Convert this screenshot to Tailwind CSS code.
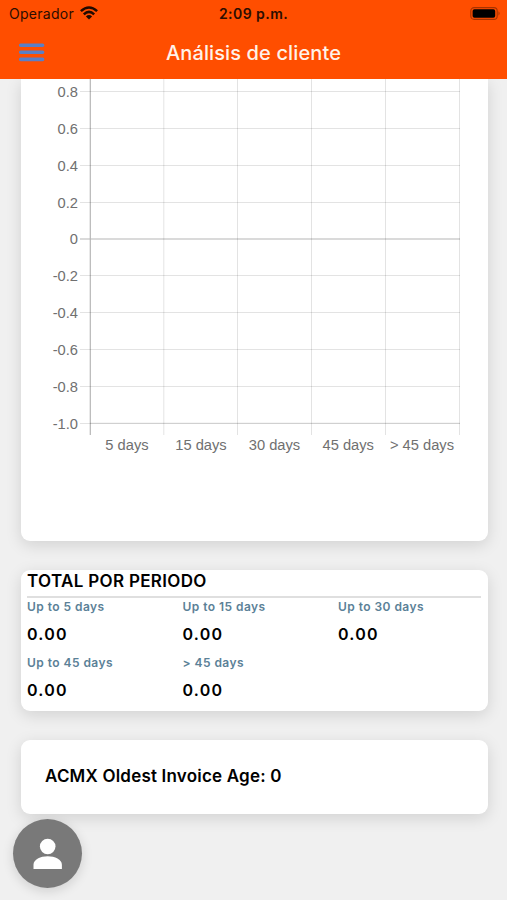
<!DOCTYPE html>
<html lang="es">
<head>
<meta charset="utf-8">
<title>Análisis de cliente</title>
<script src="https://cdn.jsdelivr.net/npm/@tailwindcss/browser@4"></script>
</head>
<body class="relative h-[900px] w-[507px] overflow-hidden bg-[#f0f0f0] font-['Inter','Liberation_Sans',sans-serif] text-black">
<header class="relative z-10 h-[79px] bg-[#ff4e00]">
  <div class="grid h-[27px] grid-cols-3 items-center px-[9px]">
    <div class="flex items-center gap-[6px]">
      <span class="whitespace-nowrap text-[14px] leading-[27px] tracking-[0.28px] text-[#2b0d00]">Operador</span>
      <svg class="h-[14px] w-[18px] -translate-y-px" viewBox="0 0 18 14" fill="none" stroke="#210a00" stroke-width="2.5"><path d="M.9 5.2Q9-2.3 17.1 5.2M3.8 8.3Q9 3.5 14.2 8.3"/><path d="M9 13.5 5.9 10.4Q9 7.8 12.1 10.4Z" fill="#210a00" stroke="none"/></svg>
    </div>
    <span class="whitespace-nowrap text-center text-[14px] font-semibold leading-[27px] tracking-[0.45px] text-[#2b0d00]">2:09 p.m.</span>
    <svg class="-mr-[2.5px] h-[13px] w-[31px] justify-self-end" viewBox="0 0 31 13"><rect x=".8" y=".6" width="26.4" height="11.8" rx="3.4" fill="none" stroke="#a63300" stroke-width="1.1"/><rect x="2.6" y="2.3" width="22.6" height="8.4" rx="1.8" fill="#000"/><path d="M28.5 4.3q2.2 2.2 0 4.4z" fill="#a63300"/></svg>
  </div>
  <div class="grid h-[52px] grid-cols-[60px_1fr_60px] items-center">
    <svg class="ml-[18px] h-[20px] w-[27px]" viewBox="0 0 27 20" stroke="#5a7fc6" stroke-width="3.6" stroke-linecap="round"><path d="M2.7 2.3h21.9M2.7 9.3h21.9M2.7 16.4h21.9"/></svg>
    <h1 class="h-[52px] whitespace-nowrap text-center text-[20px] font-medium leading-[52px] tracking-[0.12px] text-[#fff2e9]">Análisis de cliente</h1>
  </div>
</header>

<main class="flex flex-col gap-[29px] pl-[20.5px] pr-[19.5px]">
  <section class="h-[462px] rounded-b-[9px] bg-white shadow-[0_4px_16px_rgba(0,0,0,0.13)]">
    <svg class="block h-[462px] w-[467px]" viewBox="21 79 467 462" font-family="'Liberation Sans', sans-serif" font-size="14.7" fill="#707070">
      <g stroke="#000" stroke-opacity=".11" stroke-width="1">
        <path d="M80 91.5H460M80 128.5H460M80 165.5H460M80 202.5H460M80 275.5H460M80 312.5H460M80 349.5H460M80 386.5H460M80 423.5H460"/>
        <path d="M163.8 79V435M237.5 79V435M311.5 79V435M385.5 79V435M459.5 79V435"/>
        <path d="M90 423.2H460" stroke-opacity=".12"/>
      </g>
      <path d="M80 239H460M90.3 79V435" fill="none" stroke="#000" stroke-opacity=".29" stroke-width="1.2"/>
      <g text-anchor="end">
        <text x="78" y="97">0.8</text><text x="78" y="134">0.6</text><text x="78" y="170.5">0.4</text><text x="78" y="207.5">0.2</text><text x="78" y="244.3">0</text><text x="78" y="281">-0.2</text><text x="78" y="318">-0.4</text><text x="78" y="355">-0.6</text><text x="78" y="391.8">-0.8</text><text x="78" y="428.7">-1.0</text>
      </g>
      <g text-anchor="middle">
        <text x="127" y="450">5 days</text><text x="201" y="450">15 days</text><text x="274.5" y="450">30 days</text><text x="348.2" y="450">45 days</text><text x="422" y="450">&gt; 45 days</text>
      </g>
    </svg>
  </section>

  <section class="h-[141px] rounded-[9px] bg-white px-[6.5px] shadow-[0_4px_16px_rgba(0,0,0,0.13)]">
    <h2 class="h-[28px] w-[454px] border-b-2 border-[#dfdfdf] text-[17px] font-semibold leading-[23px] tracking-[0.33px]">TOTAL POR PERIODO</h2>
    <div class="grid grid-cols-[155.5px_155.5px_1fr] text-[16px] font-semibold tracking-[1.25px]">
      <div class="h-[56px]"><p class="text-[12px] leading-[17px] tracking-[0.45px] text-[#5b8197]">Up to 5 days</p><p class="pt-[8px] leading-[22px]">0.00</p></div>
      <div class="h-[56px]"><p class="text-[12px] leading-[17px] tracking-[0.45px] text-[#5b8197]">Up to 15 days</p><p class="pt-[8px] leading-[22px]">0.00</p></div>
      <div class="h-[56px]"><p class="text-[12px] leading-[17px] tracking-[0.45px] text-[#5b8197]">Up to 30 days</p><p class="pt-[8px] leading-[22px]">0.00</p></div>
      <div class="h-[56px]"><p class="text-[12px] leading-[17px] tracking-[0.45px] text-[#5b8197]">Up to 45 days</p><p class="pt-[8px] leading-[22px]">0.00</p></div>
      <div class="h-[56px]"><p class="text-[12px] leading-[17px] tracking-[0.45px] text-[#5b8197]">&gt; 45 days</p><p class="pt-[8px] leading-[22px]">0.00</p></div>
    </div>
  </section>

  <section class="flex h-[74px] items-center rounded-[9px] bg-white px-[24.5px] shadow-[0_4px_16px_rgba(0,0,0,0.13)]">
    <p class="whitespace-nowrap pb-[1px] text-[17px] font-semibold tracking-[0.2px]">ACMX Oldest Invoice Age: 0</p>
  </section>
</main>

<button aria-label="Cliente" class="absolute left-[13px] top-[819px] flex size-[69px] items-center justify-center rounded-full bg-[#797979] shadow-[0_3px_12px_rgba(0,0,0,0.14)]">
  <svg class="h-[32px] w-[30px]" viewBox="0 0 30 32" fill="#fff"><circle cx="14.7" cy="8.5" r="7.8"/><path d="M.5 31v-4.2c0-5.6 7-8.6 14.2-8.6s14.2 3 14.2 8.6V31z"/></svg>
</button>
</body>
</html>
